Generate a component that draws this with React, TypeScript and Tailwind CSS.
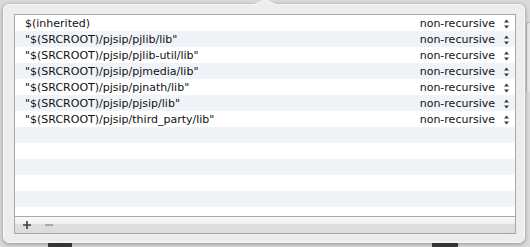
import React from "react";

const paths = [
  "$(inherited)",
  '"$(SRCROOT)/pjsip/pjlib/lib"',
  '"$(SRCROOT)/pjsip/pjlib-util/lib"',
  '"$(SRCROOT)/pjsip/pjmedia/lib"',
  '"$(SRCROOT)/pjsip/pjnath/lib"',
  '"$(SRCROOT)/pjsip/pjsip/lib"',
  '"$(SRCROOT)/pjsip/third_party/lib"',
];

const TOTAL_ROWS = 13;

function Stepper() {
  return (
    <svg width="7" height="10" viewBox="0 0 7 10" className="shrink-0">
      <path d="M3.5 0.5 L6 3.5 L1 3.5 Z" fill="#3a3a3a" />
      <path d="M3.5 9.5 L6 6.5 L1 6.5 Z" fill="#3a3a3a" />
    </svg>
  );
}

function PathRow({ index, value }: { index: number; value?: string }) {
  const striped = index % 2 === 1;
  return (
    <div
      className={`flex h-[16px] shrink-0 items-center pl-[10px] pr-[5px] pt-[2px] leading-[14px] ${
        striped ? "bg-[#f0f4f9]" : "bg-white"
      }`}
    >
      {value !== undefined && (
        <>
          <span className="flex-1 whitespace-nowrap">{value}</span>
          <span className="mr-[8px]">non-recursive</span>
          <Stepper />
        </>
      )}
    </div>
  );
}

export default function App() {
  const rows = Array.from({ length: TOTAL_ROWS }, (_, i) => paths[i]);

  return (
    <div className="relative h-[247px] w-[530px] overflow-hidden bg-[#dadada] pl-[3px] pt-[4px] font-['DejaVu_Sans',sans-serif] text-[11px] leading-none text-[#111]">
      {/* window bits behind the popover */}
      <div className="absolute left-[48px] top-[234px] h-[20px] w-[24px] rounded-t-[10px] bg-[#3c3c3c]" />
      <div className="absolute left-[432px] top-[234px] h-[20px] w-[26px] rounded-t-[10px] bg-[#3c3c3c]" />
      <div className="absolute right-0 top-[22px] h-[70px] w-[4px] rounded-tl-[3px] border-l border-t border-[#bcbcbc] bg-[#e6e6e6]" />

      <div className="relative h-[239px] w-[522px] rounded-[6px] border border-[#f6f6f6] bg-[#ededed] pl-[10px] pr-[9px] pt-[9px] shadow-[0_1px_4px_rgba(0,0,0,0.35)]">
        {/* popover arrow */}
        <svg
          width="26"
          height="6"
          viewBox="0 0 26 6"
          className="absolute left-[248px] top-[-5px]"
        >
          <path d="M0 6 L11 0.5 Q13 -0.5 15 0.5 L26 6 Z" fill="#ededed" />
          <path d="M0 5.5 L11 0.5 Q13 -0.5 15 0.5 L26 5.5" fill="none" stroke="#f7f7f7" strokeWidth="1" />
        </svg>

        <div className="flex h-[220px] w-[502px] flex-col border border-[#a8a8a8] bg-white">
          <div className="flex h-[201px] flex-col overflow-hidden">
            {rows.map((value, i) => (
              <PathRow key={i} index={i} value={value} />
            ))}
          </div>
          <div className="flex h-[17px] items-center gap-[14px] border-t border-[#a8a8a8] bg-[linear-gradient(#f9f9f9,#f0f0f0_40%,#dedede_45%,#dcdcdc)] pl-[8px]">
            <svg width="8" height="8" viewBox="0 0 8 8">
              <path d="M4 0 V8 M0 4 H8" stroke="#404040" strokeWidth="1.6" />
            </svg>
            <svg width="8" height="8" viewBox="0 0 8 8">
              <path d="M0 4 H8" stroke="#9a9a9a" strokeWidth="1.6" />
            </svg>
          </div>
        </div>
      </div>
    </div>
  );
}
